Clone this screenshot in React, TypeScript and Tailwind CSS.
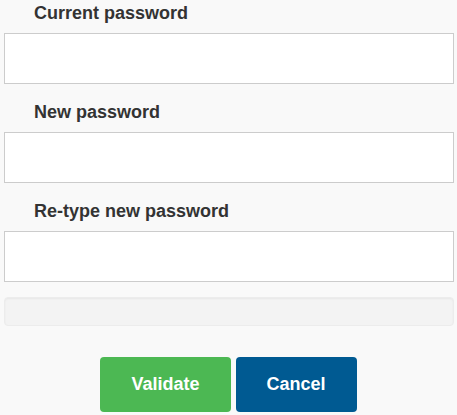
import React from 'react'

const fields = ['Current password', 'New password', 'Re-type new password']

export default function App() {
  return (
    <div className="min-h-[415px] w-[457px] bg-[#f9f9f9] pl-1 font-['Liberation_Sans',Arial,sans-serif] text-[#333]">
      <form className="flex w-[450px] flex-col">
        {fields.map((label) => (
          <div key={label} className="mb-[15px] flex flex-col">
            <label className="pl-[30px] text-[18px] font-bold leading-[26px]">{label}</label>
            <input
              type="password"
              className="mt-[7px] h-[51px] w-full border border-[#ccc] bg-white px-3 outline-none"
            />
          </div>
        ))}

        <div className="h-[29px] w-full rounded-[4px] border border-[#ececec] bg-[#f3f3f3] shadow-[inset_0_1px_2px_rgba(0,0,0,0.05)]" />

        <div className="mt-[31px] flex justify-center gap-[5px] pr-[1px]">
          <button
            type="button"
            className="h-[55px] rounded-[4px] bg-[#4cb853] px-[31px] text-[18px] font-bold text-white"
          >
            Validate
          </button>
          <button
            type="button"
            className="h-[55px] rounded-[4px] bg-[#005a92] px-[31px] text-[18px] font-bold text-white"
          >
            Cancel
          </button>
        </div>
      </form>
    </div>
  )
}
